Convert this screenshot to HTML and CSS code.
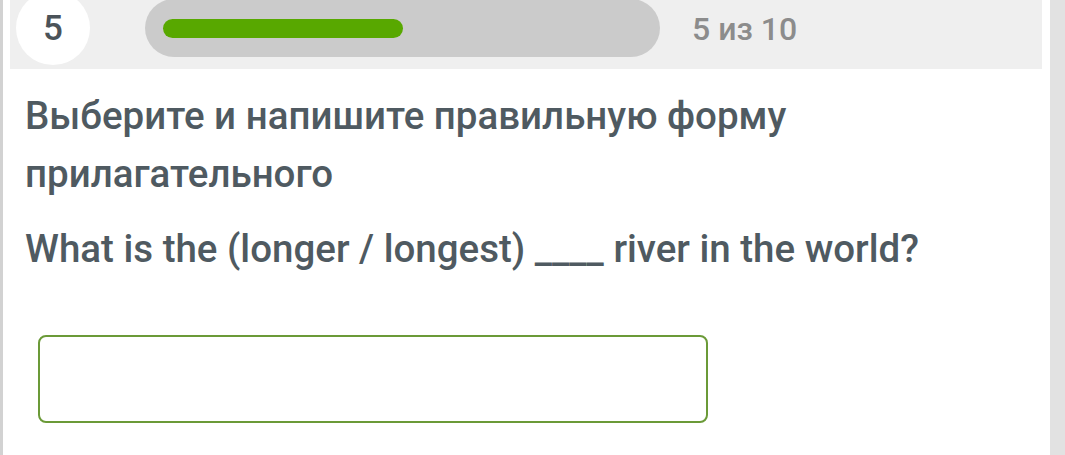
FILE: index.html
```html
<!DOCTYPE html>
<html lang="ru">
<head>
<meta charset="utf-8">
<link rel="stylesheet" href="styles.css">
</head>
<body>
<div class="page">
  <main class="card">
    <header class="progress-head">
      <div class="step-circle">5</div>
      <div class="track"><div class="fill" style="width:240px"></div></div>
      <div class="counter">5 из 10</div>
    </header>
    <section class="task">
      <h1 class="title">Выберите и напишите правильную форму прилагательного</h1>
      <p class="question">What is the (longer / longest) ____ river in the world?</p>
      <div class="answer"></div>
    </section>
  </main>
  <aside class="side"></aside>
</div>
</body>
</html>
```

FILE: styles.css
```css
html, body {
  margin: 0;
  padding: 0;
  height: 100%;
  background: #ffffff;
  font-family: Roboto, "Noto Sans", Arial, sans-serif;
}
.page {
  display: flex;
  height: 455px;
  overflow: hidden;
  border-left: 3px solid #d2d2d2;
}
.card {
  flex: 1;
  background: #ffffff;
  padding: 0 8px 0 7px;
}
.side {
  width: 15px;
  background: #e2e2e2;
}
.progress-head {
  height: 69px;
  background: #efefef;
  display: flex;
  align-items: flex-start;
  padding-left: 6px;
  overflow: hidden;
}
.step-circle {
  width: 74px;
  height: 74px;
  margin-top: -9px;
  border-radius: 50%;
  background: #ffffff;
  display: flex;
  align-items: center;
  justify-content: center;
  font-size: 35px;
  font-weight: 500;
  color: #4b5359;
  flex: none;
}
.track {
  margin-left: 55px;
  margin-top: -1px;
  width: 515px;
  height: 58px;
  border-radius: 29px;
  background: #cbcbcb;
  padding: 20px 0 0 18px;
  box-sizing: border-box;
  flex: none;
}
.fill {
  height: 19px;
  border-radius: 10px;
  background: #58a800;
}
.counter {
  margin-left: 32px;
  margin-top: 9px;
  font-size: 32px;
  line-height: 40px;
  color: #8c8c8c;
  font-weight: 500;
}
.task {
  padding: 18px 0 0 15px;
}
.title {
  margin: 0;
  font-size: 38.5px;
  line-height: 58px;
  font-weight: 500;
  color: #4f5a61;
  max-width: 820px;
}
.question {
  margin: 19px 0 0 0;
  font-size: 38.5px;
  line-height: 54px;
  font-weight: 500;
  color: #4f5a61;
}
.answer {
  margin: 59px 0 0 13px;
  width: 670px;
  height: 88px;
  box-sizing: border-box;
  border: 2px solid #6b9a38;
  border-radius: 8px;
}
```
